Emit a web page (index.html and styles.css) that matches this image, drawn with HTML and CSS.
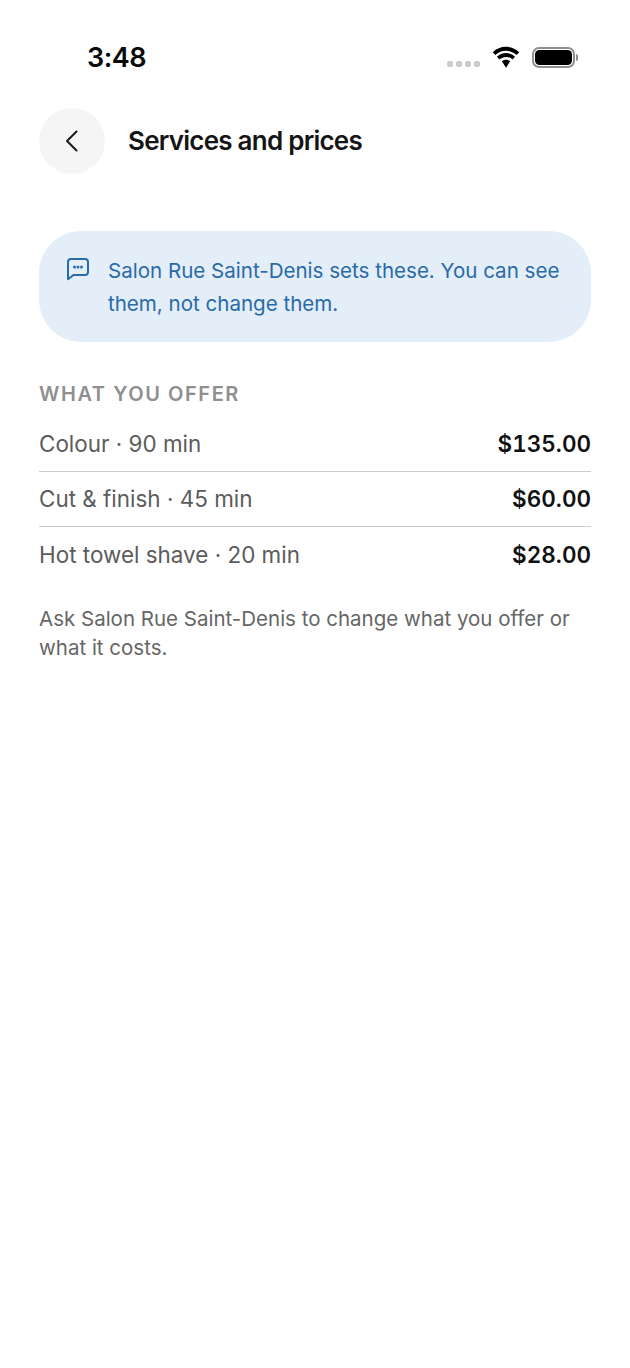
FILE: index.html
```html
<!DOCTYPE html>
<html lang="en">
<head>
    <meta charset="UTF-8">
    <title>Services and prices</title>
    <link rel="stylesheet" href="styles.css">
</head>
<body>
    <div class="status-bar">
        <span class="clock">3:48</span>
        <div class="status-icons">
            <div class="signal"><i></i><i></i><i></i><i></i></div>
            <svg class="wifi" width="28" height="22" viewBox="1.500 0 26 20.800">
                <path d="M14.500 4.500c-3.900 0-7.400 1.500-10 4L2 5.900C5.300 2.700 9.700 .8 14.500 .8s9.200 1.900 12.500 5.100l-2.500 2.600c-2.600-2.500-6.100-4-10-4z" fill="#000"/>
                <path d="M14.500 10.300c-2.400 0-4.500.9-6.100 2.400l-2.500-2.600c2.200-2.200 5.300-3.500 8.600-3.500s6.400 1.300 8.600 3.500l-2.500 2.600c-1.600-1.500-3.700-2.400-6.100-2.400z" fill="#000"/>
                <path d="M14.500 13c1.500 0 2.900.6 3.900 1.500L14.500 20.500l-3.900-6c1-.9 2.400-1.500 3.900-1.500z" fill="#000"/>
            </svg>
            <div class="battery"><div class="battery-fill"></div></div>
            <div class="battery-cap"></div>
        </div>
    </div>

    <header class="top-bar">
        <button class="back-btn" type="button">
            <svg width="16" height="24" viewBox="0 0 16 24">
                <path d="M12.500 2.500L3 12l9.500 9.500" fill="none" stroke="#1a1a1a" stroke-width="2" stroke-linecap="round" stroke-linejoin="round"/>
            </svg>
        </button>
        <h1 class="page-title">Services and prices</h1>
    </header>

    <main class="content">
        <div class="notice">
            <svg class="notice-icon" width="24" height="24" viewBox="0 0 24 24">
                <path d="M5 2h14a3 3 0 0 1 3 3v10a3 3 0 0 1-3 3H7.500L2 22.200V5a3 3 0 0 1 3-3z" fill="none" stroke="#2a6aa8" stroke-width="2" stroke-linejoin="round"/>
                <circle cx="8.500" cy="10" r="1.500" fill="#2a6aa8"/>
                <circle cx="12" cy="10" r="1.500" fill="#2a6aa8"/>
                <circle cx="15.500" cy="10" r="1.500" fill="#2a6aa8"/>
            </svg>
            <p class="notice-text">Salon Rue Saint-Denis sets these. You can see them, not change them.</p>
        </div>

        <h2 class="section-label">WHAT YOU OFFER</h2>
        <ul class="price-list">
            <li class="price-row"><span class="service">Colour · 90 min</span><span class="price">$135.00</span></li>
            <li class="price-row"><span class="service">Cut &amp; finish · 45 min</span><span class="price">$60.00</span></li>
            <li class="price-row"><span class="service">Hot towel shave · 20 min</span><span class="price">$28.00</span></li>
        </ul>

        <p class="footnote">Ask Salon Rue Saint-Denis to change what you offer or what it costs.</p>
    </main>
</body>
</html>
```

FILE: styles.css
```css
body {
    margin: 0;
    background: #fff;
    font-family: Inter, "Liberation Sans", sans-serif;
    color: #111;
}
.status-bar {
    height: 108px;
    box-sizing: border-box;
    padding: 40px 52px 0 87px;
    display: flex;
    justify-content: space-between;
    align-items: flex-start;
}
.clock {
    font-size: 27px;
    line-height: 36px;
    font-weight: 600;
    letter-spacing: -0.5px;
    color: #0a0a0a;
}
.status-icons {
    display: flex;
    align-items: center;
    height: 34px;
}
.signal {
    display: flex;
    gap: 3px;
    margin-top: 14px;
    margin-right: 12px;
}
.signal i {
    width: 6px;
    height: 6px;
    border-radius: 2px;
    background: #cbcbcb;
}
.wifi {
    margin-right: 12px;
}
.battery {
    width: 43px;
    height: 21px;
    box-sizing: border-box;
    border: 2px solid #8f8f8f;
    border-radius: 7px;
    padding: 1px;
}
.battery-fill {
    height: 100%;
    background: #000;
    border-radius: 4.500px;
}
.battery-cap {
    width: 2px;
    height: 7px;
    margin-left: 1px;
    background: #8f8f8f;
    border-radius: 0 2px 2px 0;
}
.top-bar {
    display: flex;
    align-items: center;
    gap: 23px;
    padding: 0 39px;
}
.back-btn {
    width: 66px;
    height: 66px;
    border: none;
    border-radius: 50%;
    background: #f5f5f5;
    padding: 0;
    display: flex;
    align-items: center;
    justify-content: center;
}
.page-title {
    margin: 0;
    font-size: 26px;
    line-height: 34px;
    font-weight: 600;
    letter-spacing: -0.76px;
    color: #151515;
}
.content {
    padding: 57px 39px 0;
}
.notice {
    display: flex;
    gap: 18px;
    padding: 23px 24px 22px 27px;
    background: #e3eef8;
    border-radius: 42px;
}
.notice-icon {
    flex: none;
    margin-top: 3px;
}
.notice-text {
    margin: 0;
    font-size: 20.550px;
    line-height: 33px;
    color: #2a6aa8;
}
.section-label {
    margin: 38px 0 0;
    font-size: 20px;
    line-height: 28px;
    font-weight: 600;
    letter-spacing: 1.570px;
    color: #8f8f8f;
}
.price-list {
    list-style: none;
    margin: 8px 0 0;
    padding: 0;
}
.price-row {
    display: flex;
    justify-content: space-between;
    align-items: center;
    height: 55.500px;
    box-sizing: border-box;
    border-bottom: 1.500px solid #cccccc;
}
.price-row:last-child {
    border-bottom-color: transparent;
}
.service {
    font-size: 22.450px;
    color: #5c5c5c;
}
.price {
    font-size: 22.500px;
    font-weight: 600;
    font-variant-numeric: tabular-nums;
    color: #111;
}
.footnote {
    margin: 21px 0 0;
    font-size: 20.500px;
    line-height: 29px;
    color: #666;
}
```
